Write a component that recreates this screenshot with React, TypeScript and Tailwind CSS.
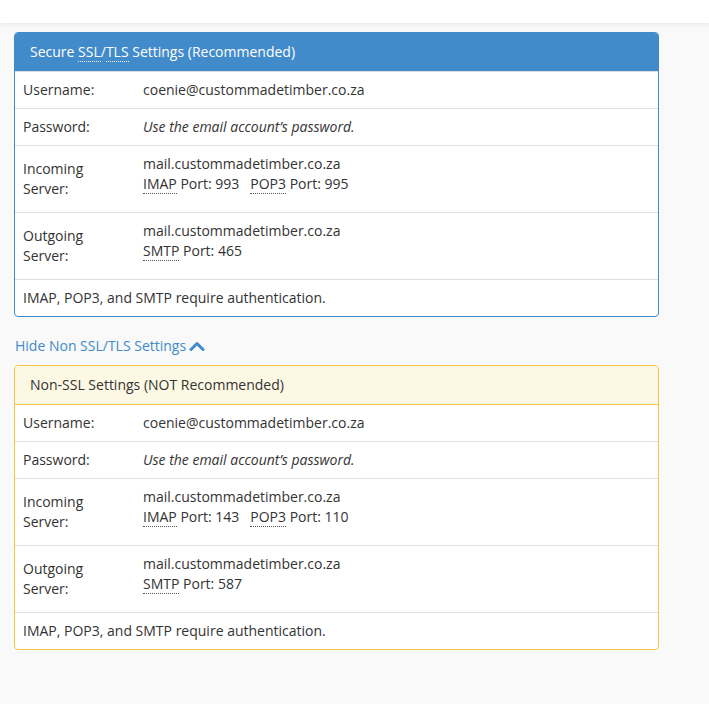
import React from "react";

const Abbr = ({ children, light }: { children: React.ReactNode; light?: boolean }) => (
  <abbr
    className={
      "no-underline border-b border-dotted " + (light ? "border-[#e8f0f8]" : "border-[#555]")
    }
    style={{ textDecoration: "none" }}
  >
    {children}
  </abbr>
);

function Row({ label, children, tall }: { label: React.ReactNode; children: React.ReactNode; tall?: boolean }) {
  return (
    <div className="flex border-t border-[#dddddd]">
      <div className={"w-[120px] shrink-0 px-2 flex items-center leading-5 " + (tall ? "py-[13px]" : "py-2")}>{label}</div>
      <div className={"flex-1 px-2 leading-5 " + (tall ? "pt-2 pb-[18px]" : "py-2")}>{children}</div>
    </div>
  );
}

function Panel({ variant, title }: { variant: "ssl" | "nonssl"; title: React.ReactNode }) {
  const ssl = variant === "ssl";
  return (
    <div
      className={
        "w-[645px] rounded-[4px] border bg-white overflow-hidden " +
        (ssl ? "border-[#428bca]" : "border-[#f8c540]")
      }
    >
      <div
        className={
          "px-[15px] leading-5 " +
          (ssl ? "bg-[#428bca] text-white py-[9px]" : "bg-[#fcf8e3] text-[#333] py-[9px] border-b border-[#f8c540]")
        }
      >
        {title}
      </div>
      <div className={ssl ? "" : "[&>div:first-child]:border-t-0"}>
        <Row label="Username:">coenie@custommadetimber.co.za</Row>
        <Row label="Password:">
          <em>Use the email account’s password.</em>
        </Row>
        <Row label={<span>Incoming<br />Server:</span>} tall>
          <div>mail.custommadetimber.co.za</div>
          <div>
            <Abbr>IMAP</Abbr> Port: {ssl ? "993" : "143"}
            <span className="inline-block w-[11px]" />
            <Abbr>POP3</Abbr> Port: {ssl ? "995" : "110"}
          </div>
        </Row>
        <Row label={<span>Outgoing<br />Server:</span>} tall>
          <div>mail.custommadetimber.co.za</div>
          <div>
            <Abbr>SMTP</Abbr> Port: {ssl ? "465" : "587"}
          </div>
        </Row>
        <div className="border-t border-[#dddddd] px-2 py-2 leading-5">
          IMAP, POP3, and SMTP require authentication.
        </div>
      </div>
    </div>
  );
}

export default function App() {
  return (
    <div
      className="min-h-[704px] bg-[#f9f9f9] text-[14px] text-[#333]"
      style={{ fontFamily: "'Open Sans', 'Liberation Sans', sans-serif" }}
    >
      <div className="h-[23px] bg-white shadow-[0_2px_4px_rgba(0,0,0,0.06)]" />
      <div className="pl-[14px] pt-[9px]">
        <Panel
          variant="ssl"
          title={
            <span>
              Secure <Abbr light>SSL</Abbr>/<Abbr light>TLS</Abbr> Settings (Recommended)
            </span>
          }
        />
        <div className="mt-[19px] mb-[9px] leading-5 text-[#428bca] flex items-center pl-px">
          <span>Hide Non SSL/TLS Settings</span>
          <svg className="ml-[3px]" width="16" height="12" viewBox="0 0 16 12" fill="none">
            <path d="M2 9.5 L8 3.5 L14 9.5" stroke="#428bca" strokeWidth="3" strokeLinecap="round" strokeLinejoin="round" />
          </svg>
        </div>
        <Panel variant="nonssl" title="Non-SSL Settings (NOT Recommended)" />
      </div>
    </div>
  );
}
